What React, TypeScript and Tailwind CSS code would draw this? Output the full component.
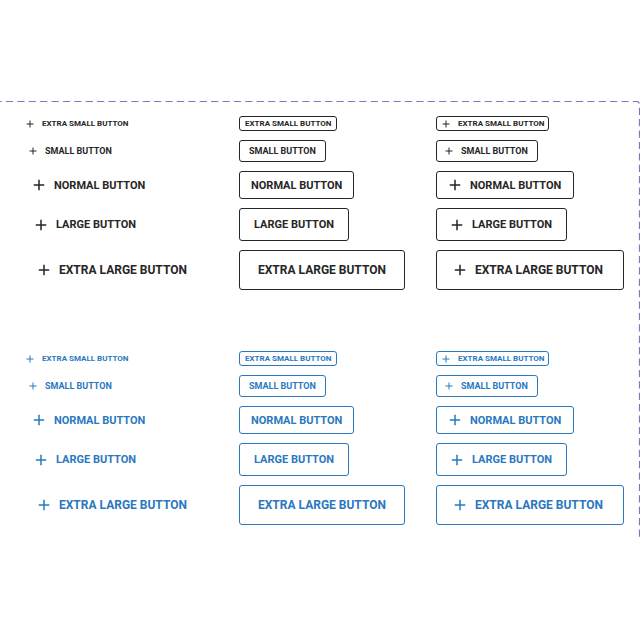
type Size = { name: string; button: string; pad: string; iconPad: string; icon: number; stroke: number };

const sizes: Size[] = [
  { name: "EXTRA SMALL BUTTON", button: "h-[15px] text-[8px]", pad: "px-[5px]", iconPad: "pl-[3px] pr-[4px]", icon: 12, stroke: 2 },
  { name: "SMALL BUTTON", button: "h-[22px] text-[9px]", pad: "px-[9px]", iconPad: "pl-[6px] pr-[9px]", icon: 12, stroke: 2 },
  { name: "NORMAL BUTTON", button: "h-[28px] text-[11px]", pad: "px-[11px]", iconPad: "pl-[9px] pr-[12px]", icon: 18, stroke: 2 },
  { name: "LARGE BUTTON", button: "h-[33px] text-[11px]", pad: "px-[14px]", iconPad: "pl-[11px] pr-[14px]", icon: 18, stroke: 2 },
  { name: "EXTRA LARGE BUTTON", button: "h-[40px] text-[12px]", pad: "px-[18px]", iconPad: "pl-[14px] pr-[20px]", icon: 18, stroke: 2 },
];

function Plus({ size, stroke }: { size: number; stroke: number }) {
  return (
    <svg width={size} height={size} viewBox="0 0 24 24" fill="none" stroke="currentColor" strokeWidth={stroke} className="shrink-0" aria-hidden="true">
      <path d="M12 5v14M5 12h14" />
    </svg>
  );
}

function Column({ outlined, icon }: { outlined: boolean; icon: boolean }) {
  return (
    <div className="flex flex-col items-start gap-[9px]">
      {sizes.map((s) => (
        <button
          key={s.name}
          type="button"
          className={`flex items-center gap-[6px] rounded-[3px] border font-bold leading-none whitespace-nowrap ${
            outlined ? "border-current" : "border-transparent"
          } ${s.button} ${icon ? s.iconPad : s.pad}`}
        >
          {icon && <Plus size={s.icon} stroke={s.stroke} />}
          <span>{s.name}</span>
        </button>
      ))}
    </div>
  );
}

function Group({ color }: { color: string }) {
  return (
    <section className={`grid grid-cols-[219fr_197fr_189fr] ${color}`}>
      <Column outlined={false} icon />
      <Column outlined icon={false} />
      <Column outlined icon />
    </section>
  );
}

export default function App() {
  return (
    <main className="min-h-screen bg-white pt-[101px] font-['Roboto',sans-serif]">
      <div className="relative flex flex-col gap-[61px] pt-[15px] pr-[15px] pb-[15px] pl-[20px]">
        <div className="pointer-events-none absolute inset-0 overflow-hidden" aria-hidden="true">
          <svg className="absolute top-0 right-0 h-[calc(100%+12px)] w-[calc(100%+12px)]">
            <rect x="-0.5" y="0.5" width="100%" height="100%" rx="3" fill="none" stroke="#7d78c6" strokeWidth="1.2" strokeDasharray="7.2 4.2" strokeDashoffset="-4" />
          </svg>
        </div>
        <Group color="text-[#262626]" />
        <Group color="text-[#2a78c0]" />
      </div>
    </main>
  );
}
